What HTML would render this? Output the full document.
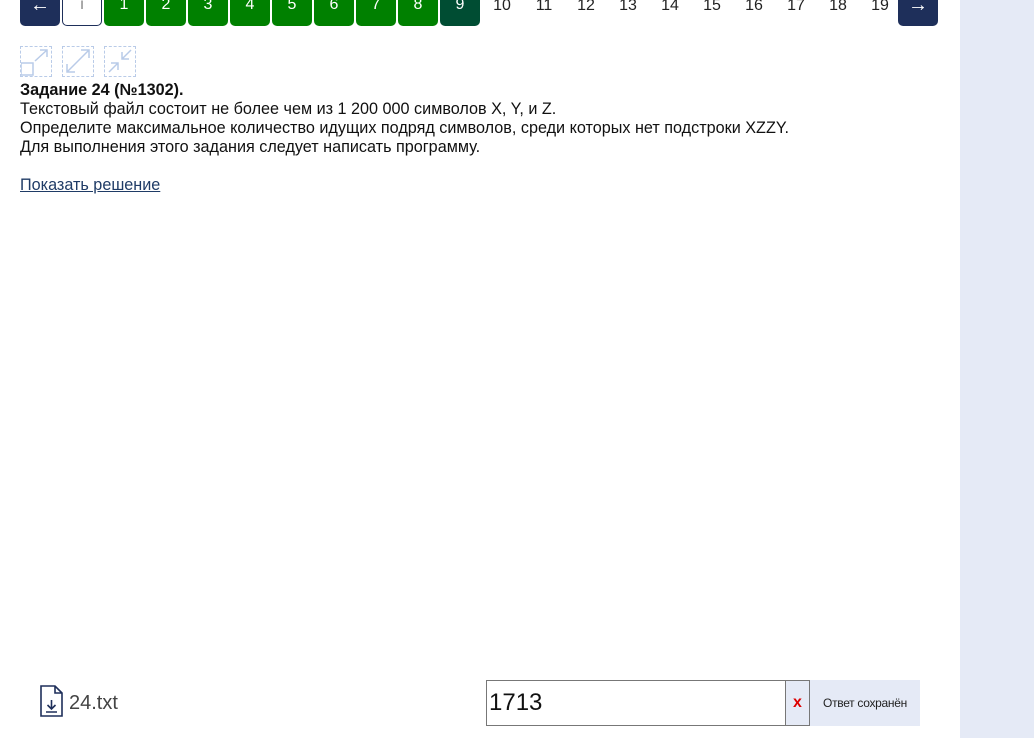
<!DOCTYPE html>
<html><head><meta charset="utf-8"><style>
*{box-sizing:border-box;margin:0;padding:0}
body{width:1034px;height:738px;overflow:hidden;background:#fff;font-family:"Liberation Sans",sans-serif;position:relative;color:#111}
.side{position:absolute;left:960px;top:0;width:74px;height:738px;background:#e5eaf6}
.b{position:absolute;top:-6px;height:32px;width:40px;border-radius:0 0 5px 5px;color:#fff;font-size:16px;text-align:center;line-height:20px;padding-top:1px}
.g{background:#008000}
.n{position:absolute;top:-4px;font-size:16px;width:40px;text-align:center;color:#222;line-height:20px}
.ic{position:absolute;top:46px;width:32px;height:31px;border:1px dashed #b9cbe8}
.txt{position:absolute;left:20px;top:81px;font-size:16.2px;line-height:19px;color:#111}
a{color:#1f3b66}
</style></head><body>
<div class="side"></div>
<div class="b" style="left:20px;background:#1e2f5a;font-size:20px">←</div>
<div class="b" style="left:62px;background:#fff;border:1px solid #1e2f5a;border-top:none;color:#888">i</div>
<div class="b g" style="left:104px">1</div>
<div class="b g" style="left:146px">2</div>
<div class="b g" style="left:188px">3</div>
<div class="b g" style="left:230px">4</div>
<div class="b g" style="left:272px">5</div>
<div class="b g" style="left:314px">6</div>
<div class="b g" style="left:356px">7</div>
<div class="b g" style="left:398px">8</div>
<div class="b" style="left:440px;background:#004d33">9</div>
<div class="n" style="left:482px">10</div>
<div class="n" style="left:524px">11</div>
<div class="n" style="left:566px">12</div>
<div class="n" style="left:608px">13</div>
<div class="n" style="left:650px">14</div>
<div class="n" style="left:692px">15</div>
<div class="n" style="left:734px">16</div>
<div class="n" style="left:776px">17</div>
<div class="n" style="left:818px">18</div>
<div class="n" style="left:860px">19</div>
<div class="b" style="left:898px;background:#1e2f5a;font-size:20px">→</div>

<div class="ic" style="left:20px"><svg width="30" height="29" fill="none" stroke="#b9cbe8" stroke-width="1.5"><rect x="0" y="16" width="12" height="12"/><path d="M14 14L26 3M19 3h7v7"/></svg></div>
<div class="ic" style="left:62px"><svg width="30" height="29" fill="none" stroke="#b9cbe8" stroke-width="1.5"><path d="M4 25L26 3M18 3h8v8M4 17v8h8"/></svg></div>
<div class="ic" style="left:104px"><svg width="30" height="29" fill="none" stroke="#b9cbe8" stroke-width="1.5"><path d="M26 3L17 12M17 5v7h7M4 25l9-9M6 16h7v7"/></svg></div>

<div class="txt"><b>Задание 24 (№1302).</b><br>Текстовый файл состоит не более чем из 1 200 000 символов X, Y, и Z.<br>Определите максимальное количество идущих подряд символов, среди которых нет подстроки XZZY.<br>Для выполнения этого задания следует написать программу.<br><br><a href="#">Показать решение</a></div>

<svg style="position:absolute;left:40px;top:685px" width="24" height="32" fill="none" stroke="#1e2f5a" stroke-width="1.6"><path d="M1 1h14l7 7v23H1z M15 1v7h7"/><path d="M11.5 15v9M7.5 20l4 4 4-4M6 27h11"/></svg>
<div style="position:absolute;left:69px;top:692px;font-size:20px;color:#444">24.txt</div>

<div style="position:absolute;left:486px;top:680px;width:300px;height:46px;border:1px solid #777;font-size:24px;padding:9px 2px;line-height:26px">1713</div>
<div style="position:absolute;left:786px;top:680px;width:24px;height:46px;border:1px solid #777;border-left:none;background:#e5eaf6;color:#d00;font-weight:bold;font-size:16px;text-align:center;line-height:44px">x</div>
<div style="position:absolute;left:810px;top:680px;width:110px;height:46px;background:#e5eaf6;font-size:12px;text-align:center;line-height:46px;color:#222;letter-spacing:-0.3px">Ответ сохранён</div>
</body></html>
